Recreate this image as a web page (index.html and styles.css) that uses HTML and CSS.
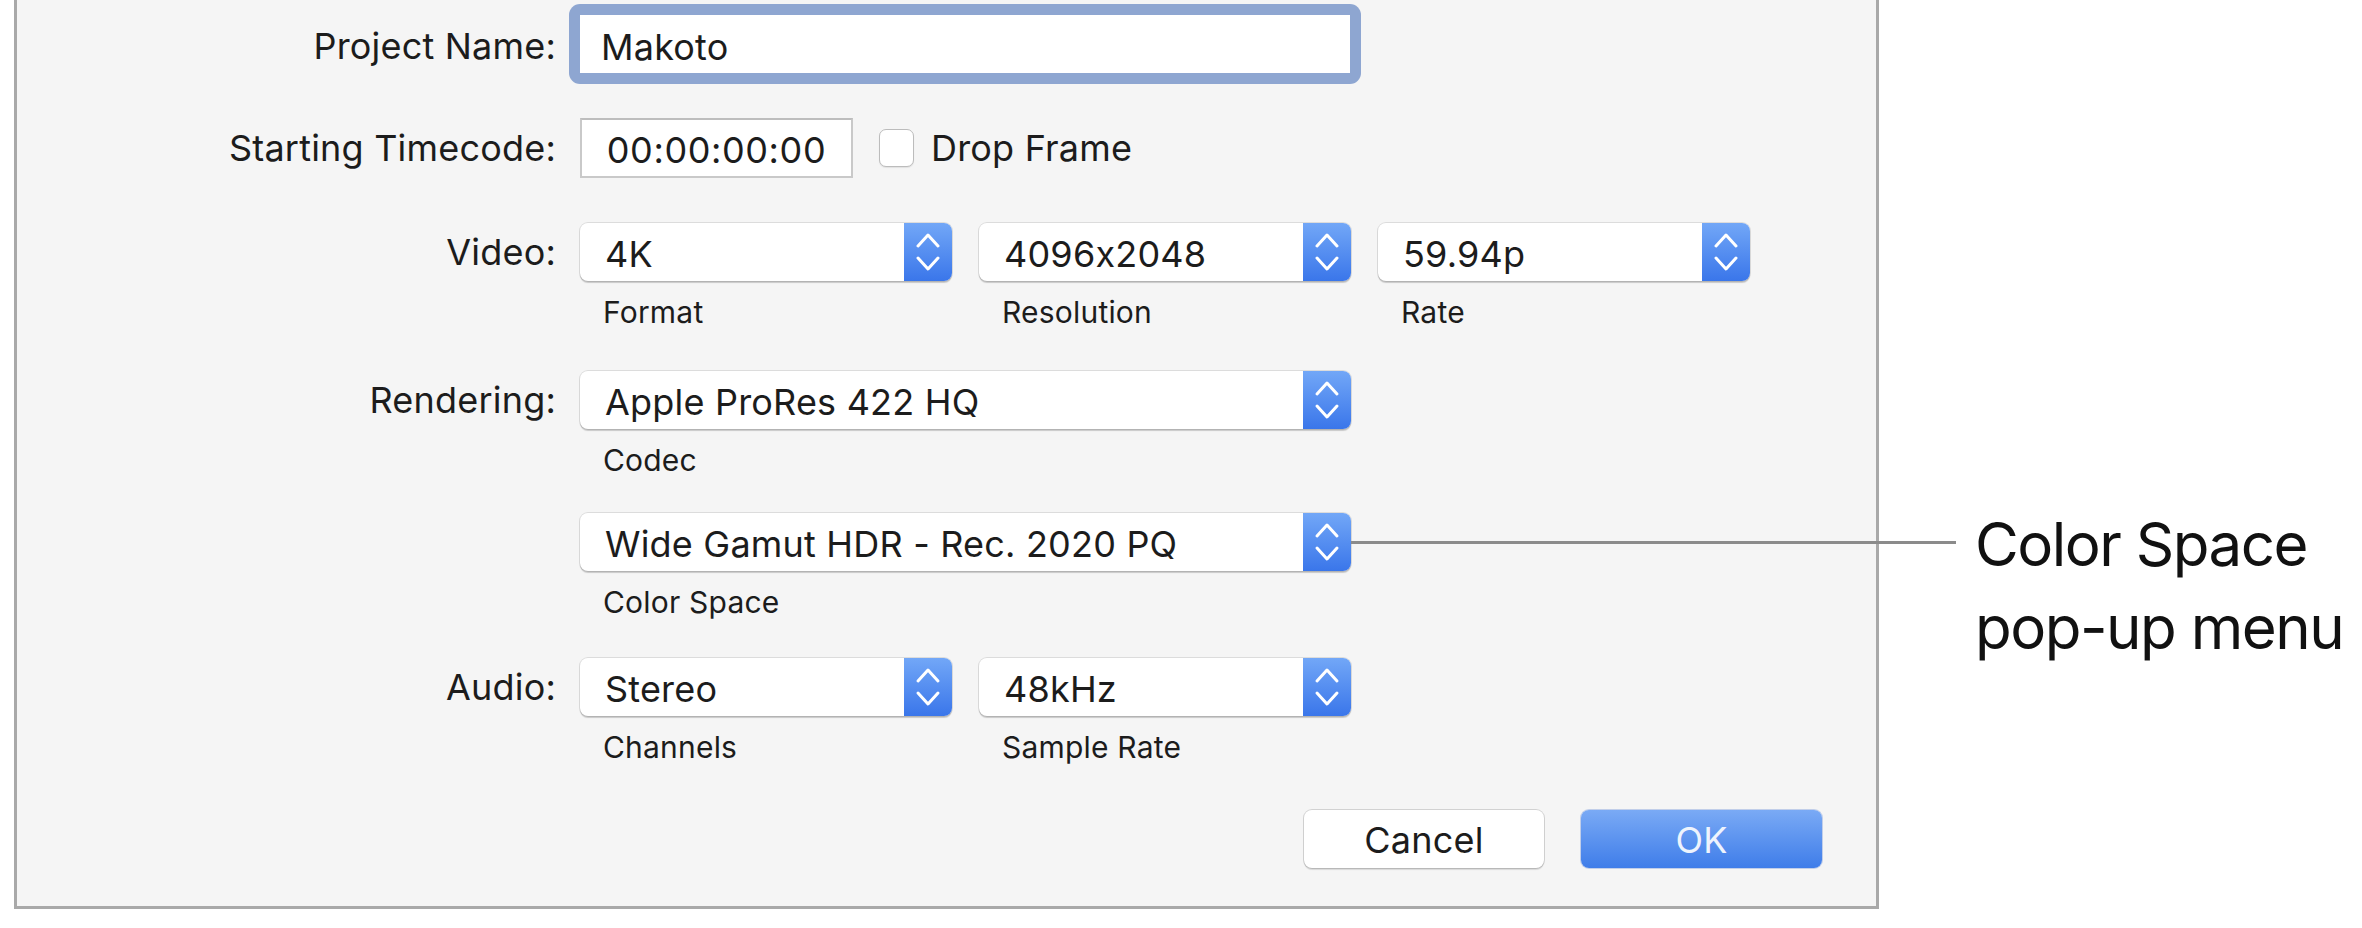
FILE: index.html
```html
<!DOCTYPE html>
<html lang="en">
<head>
<meta charset="utf-8">
<title>Project Settings</title>
<link rel="stylesheet" href="styles.css">
</head>
<body>
<div class="stage">
  <div class="dialog">
    <div class="row row-name">
      <div class="label">Project Name:</div>
      <div class="focus-ring"><div class="textfield">Makoto</div></div>
    </div>

    <div class="row row-tc">
      <div class="label">Starting Timecode:</div>
      <div class="timecode">00:00:00:00</div>
      <div class="checkbox"></div>
      <div class="check-label">Drop Frame</div>
    </div>

    <div class="row row-video">
      <div class="label label-popup">Video:</div>
      <div class="groups">
        <div class="group">
          <div class="popup w-short"><span class="popup-value">4K</span><span class="arrows"><svg viewBox="0 0 48 58" width="48" height="58"><path d="M14 23 L24 12 L34 23 M14 35 L24 46 L34 35" fill="none" stroke="#fff" stroke-width="3" stroke-linecap="round" stroke-linejoin="round"/></svg></span></div>
          <div class="sublabel">Format</div>
        </div>
        <div class="group">
          <div class="popup w-short"><span class="popup-value">4096x2048</span><span class="arrows"><svg viewBox="0 0 48 58" width="48" height="58"><path d="M14 23 L24 12 L34 23 M14 35 L24 46 L34 35" fill="none" stroke="#fff" stroke-width="3" stroke-linecap="round" stroke-linejoin="round"/></svg></span></div>
          <div class="sublabel">Resolution</div>
        </div>
        <div class="group">
          <div class="popup w-short"><span class="popup-value">59.94p</span><span class="arrows"><svg viewBox="0 0 48 58" width="48" height="58"><path d="M14 23 L24 12 L34 23 M14 35 L24 46 L34 35" fill="none" stroke="#fff" stroke-width="3" stroke-linecap="round" stroke-linejoin="round"/></svg></span></div>
          <div class="sublabel">Rate</div>
        </div>
      </div>
    </div>

    <div class="row row-next row-render">
      <div class="label label-popup">Rendering:</div>
      <div class="groups">
        <div class="group">
          <div class="popup w-long"><span class="popup-value">Apple ProRes 422 HQ</span><span class="arrows"><svg viewBox="0 0 48 58" width="48" height="58"><path d="M14 23 L24 12 L34 23 M14 35 L24 46 L34 35" fill="none" stroke="#fff" stroke-width="3" stroke-linecap="round" stroke-linejoin="round"/></svg></span></div>
          <div class="sublabel">Codec</div>
        </div>
      </div>
    </div>

    <div class="row row-next">
      <div class="label label-popup"></div>
      <div class="groups">
        <div class="group">
          <div class="popup w-long"><span class="popup-value">Wide Gamut HDR - Rec. 2020 PQ</span><span class="arrows"><svg viewBox="0 0 48 58" width="48" height="58"><path d="M14 23 L24 12 L34 23 M14 35 L24 46 L34 35" fill="none" stroke="#fff" stroke-width="3" stroke-linecap="round" stroke-linejoin="round"/></svg></span></div>
          <div class="sublabel">Color Space</div>
        </div>
      </div>
    </div>

    <div class="row row-next">
      <div class="label label-popup">Audio:</div>
      <div class="groups">
        <div class="group">
          <div class="popup w-short"><span class="popup-value">Stereo</span><span class="arrows"><svg viewBox="0 0 48 58" width="48" height="58"><path d="M14 23 L24 12 L34 23 M14 35 L24 46 L34 35" fill="none" stroke="#fff" stroke-width="3" stroke-linecap="round" stroke-linejoin="round"/></svg></span></div>
          <div class="sublabel">Channels</div>
        </div>
        <div class="group">
          <div class="popup w-short"><span class="popup-value">48kHz</span><span class="arrows"><svg viewBox="0 0 48 58" width="48" height="58"><path d="M14 23 L24 12 L34 23 M14 35 L24 46 L34 35" fill="none" stroke="#fff" stroke-width="3" stroke-linecap="round" stroke-linejoin="round"/></svg></span></div>
          <div class="sublabel">Sample Rate</div>
        </div>
      </div>
    </div>

    <div class="buttons">
      <div class="btn btn-cancel">Cancel</div>
      <div class="btn btn-ok">OK</div>
    </div>
  </div>

  <div class="callout">
    <div class="callout-line"></div>
    <div class="callout-text">Color Space<br>pop-up menu</div>
  </div>
</div>
</body>
</html>
```

FILE: styles.css
```css
html, body {
  margin: 0;
  padding: 0;
  background: #ffffff;
}

.stage {
  position: relative;
  width: 2362px;
  height: 928px;
  overflow: hidden;
  font-family: Inter, "Noto Sans", sans-serif;
  font-feature-settings: "calt" 0;
  color: #1c1c1c;
}

.dialog {
  margin-left: 14px;
  width: 1859px;
  background: #f5f5f5;
  border: 3px solid #a9a9a9;
  border-top: none;
  padding-top: 4px;
  padding-bottom: 38px;
  letter-spacing: 0.2px;
}

.row {
  display: flex;
  align-items: center;
}

.label {
  width: 539px;
  flex: none;
  text-align: right;
  font-size: 36px;
  margin-right: 24px;
  white-space: nowrap;
}

.label-popup {
  align-self: flex-start;
  line-height: 58px;
  height: 58px;
}

/* Project name */
.row-name .label {
  padding-top: 3px;
}

.focus-ring {
  margin-left: -11px;
  padding: 11px;
  background: #8ea6d1;
  border-radius: 11px;
}

.textfield {
  width: 749px;
  height: 58px;
  background: #ffffff;
  padding-left: 21px;
  font-size: 36px;
  line-height: 64px;
  box-sizing: content-box;
}

/* Timecode */
.row-tc {
  margin-top: 34px;
}

.timecode {
  width: 269px;
  height: 56px;
  border: 2px solid #c9c9c9;
  border-top-color: #bdbdbd;
  background: #ffffff;
  text-align: center;
  font-size: 36px;
  line-height: 60px;
  letter-spacing: 0.6px;
}

.checkbox {
  width: 33px;
  height: 36px;
  margin-left: 26px;
  border: 1.5px solid #bcbcbc;
  border-radius: 7px;
  background: #ffffff;
  box-shadow: 0 1px 1px rgba(0, 0, 0, 0.08);
}

.check-label {
  margin-left: 17px;
  font-size: 36px;
}

/* Popups */
.row-video {
  margin-top: 45px;
  align-items: flex-start;
}

.row-next {
  margin-top: 41px;
  align-items: flex-start;
}

.row-render {
  margin-top: 44px;
}

.groups {
  display: flex;
  gap: 27px;
}

.popup {
  display: flex;
  height: 58px;
  background: #ffffff;
  border-radius: 8px;
  box-shadow: 0 0 0 1px rgba(0, 0, 0, 0.1), 0 2px 1px rgba(0, 0, 0, 0.18);
}

.w-short { width: 372px; }
.w-long { width: 771px; }

.popup-value {
  flex: 1;
  padding-left: 25px;
  font-size: 36px;
  line-height: 62px;
  white-space: nowrap;
}

.arrows {
  width: 48px;
  height: 58px;
  flex: none;
  border-radius: 0 8px 8px 0;
  background: linear-gradient(#72a7f7, #3a76ea);
}

.arrows svg {
  display: block;
}

.sublabel {
  margin-top: 16px;
  padding-left: 23px;
  font-size: 30px;
  line-height: 30px;
  height: 30px;
}

.row-render + .row-next {
  margin-top: 38px;
}

/* Buttons */
.buttons {
  display: flex;
  justify-content: flex-end;
  gap: 37px;
  margin-top: 48px;
  padding-right: 54px;
}

.btn {
  width: 240px;
  height: 58px;
  border-radius: 8px;
  text-align: center;
  font-size: 36px;
  line-height: 60px;
}

.btn-cancel {
  background: #ffffff;
  box-shadow: 0 0 0 1px rgba(0, 0, 0, 0.14), 0 2px 1px rgba(0, 0, 0, 0.12);
}

.btn-ok {
  width: 241px;
  color: #eef4fd;
  background: linear-gradient(#7aaaf5, #3f7de9);
  box-shadow: 0 0 0 1px rgba(40, 90, 200, 0.25);
}

/* Callout */
.callout-line {
  position: absolute;
  left: 1351px;
  top: 541px;
  width: 605px;
  height: 3px;
  background: #8b8b8b;
}

.callout-text {
  position: absolute;
  left: 1975px;
  top: 503px;
  font-size: 60px;
  line-height: 83px;
  color: #111111;
  letter-spacing: -1.5px;
  white-space: nowrap;
}
```
